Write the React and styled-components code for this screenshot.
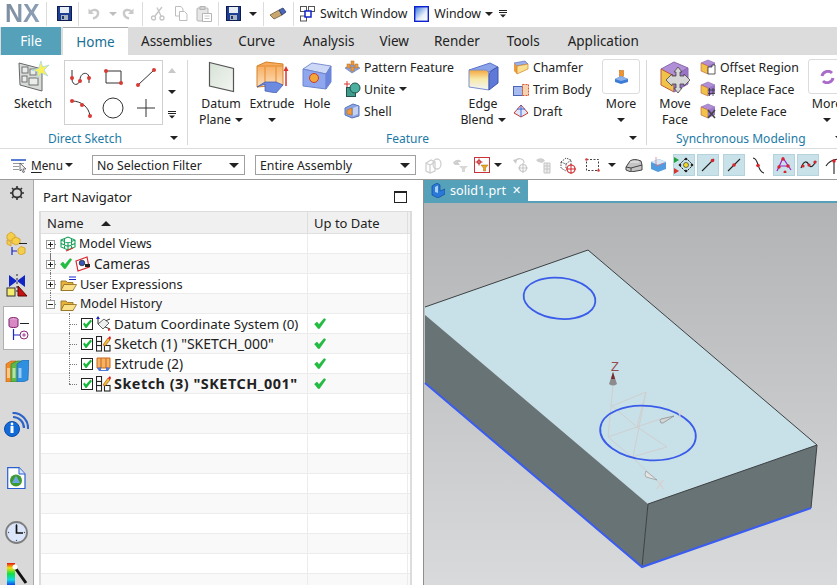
import React from 'react';
import styled, { createGlobalStyle } from 'styled-components';

const Global = createGlobalStyle`
  html, body { margin: 0; padding: 0; background: #fff; overflow: hidden; }
  * { box-sizing: border-box; }
`;

const TEAL = '#56a1ba';

/* ---------- small drawings ---------- */
const IcoSvg = styled.svg`
  display: block;
  flex: none;
`;
const Ico = ({ w = 16, h = 16, children }) => (
  <IcoSvg width={w} height={h} viewBox={`0 0 ${w} ${h}`}>{children}</IcoSvg>
);

const SaveIco = () => (
  <Ico w={15} h={15}>
    <rect x=".5" y=".5" width="14" height="14" fill="#1f3f92" stroke="#0c1c50" />
    <rect x="3" y="1" width="9" height="6" fill="#e8edf5" />
    <rect x="4" y="9" width="7" height="5" fill="#a9b4c4" />
    <rect x="5" y="10" width="2" height="3" fill="#22386f" />
  </Ico>
);
const UndoIco = ({ flip }) => (
  <Ico w={13} h={13}>
    <g transform={flip ? 'translate(13 0) scale(-1 1)' : undefined} fill="none" stroke="#c9c9c9" strokeWidth="2.4">
      <path d="M3 5 C6 1.5 12 2.5 11 7 C10.5 9.5 8 11 6 11.5" />
      <path d="M1.5 1.5 L1.5 7 L7 7" fill="#c9c9c9" stroke="none" />
    </g>
  </Ico>
);
const CutIco = () => (
  <Ico w={15} h={15}>
    <g fill="none" stroke="#c4c4c4" strokeWidth="1.3">
      <path d="M12 1 L5 10 M7 1.500 L11 10" />
      <circle cx="3.500" cy="12" r="2" /><circle cx="12" cy="12" r="2" />
    </g>
  </Ico>
);
const CopyIco = () => (
  <Ico w={14} h={15}>
    <g fill="#fff" stroke="#bdbdbd">
      <path d="M1.500 .5 H7 L9 3 V10 H1.500 Z" />
      <path d="M5.500 5.500 H10.500 L13 8 V14.500 H5.500 Z" />
    </g>
  </Ico>
);
const PasteIco = () => (
  <Ico w={16} h={16}>
    <rect x="1" y="2" width="11" height="13" rx="1" fill="#e6e6e6" stroke="#b5b5b5" />
    <rect x="4" y=".5" width="5" height="3" fill="#d2d2d2" stroke="#b5b5b5" />
    <path d="M6.500 7.500 H15.500 V15.500 H6.500 Z" fill="#fff" stroke="#b5b5b5" />
    <path d="M8.500 10 H13.500 M8.500 12.500 H13.500" stroke="#c8c8c8" />
  </Ico>
);
const BrushIco = () => (
  <Ico w={18} h={13}>
    <path d="M1 8 L10 3 L13 8 L5 12 Z" fill="#c9a66d" stroke="#6d5a38" strokeWidth=".8" />
    <path d="M10 3 L14 1 L17 5 L13 8 Z" fill="#4a67b8" stroke="#26386f" strokeWidth=".8" />
  </Ico>
);
const SwitchIco = () => (
  <Ico w={15} h={17}>
    <rect x=".5" y="1.500" width="6" height="5" fill="#fff" stroke="#555" />
    <rect x="8.500" y="1.500" width="6" height="5" fill="#fff" stroke="#555" />
    <rect x=".5" y="11" width="6" height="5" fill="#fff" stroke="#555" />
    <rect x="5" y="6" width="6" height="6" fill="#fff" stroke="#1222c8" strokeWidth="1.500" />
  </Ico>
);
const WindowIco = () => (
  <Ico w={15} h={16}>
    <defs><linearGradient id="winG" x1="0" y1="0" x2="1" y2="1"><stop offset="0" stopColor="#2f6fd8" /><stop offset=".6" stopColor="#e8f0fb" /><stop offset="1" stopColor="#fff" /></linearGradient></defs>
    <rect x=".7" y=".7" width="13.600" height="14.600" fill="url(#winG)" stroke="#0d1fd0" strokeWidth="1.400" />
  </Ico>
);
const MenuLines = () => (
  <Ico w={8} h={8}>
    <path d="M0 .5 H8 M0 2.500 H8" stroke="#222" />
    <path d="M1 4.500 H7 L4 7.500 Z" fill="#222" />
  </Ico>
);

/* ribbon */
const SketchBig = () => (
  <Ico w={32} h={32}>
    <path d="M2 2 L25 8 V30 L3 24 Z" fill="#d8dcd8" stroke="#666" />
    <g fill="#e9ece9" stroke="#666" strokeWidth=".9">
      <rect x="5" y="6" width="6" height="6" /><rect x="13" y="8" width="6" height="6" />
      <rect x="5" y="15" width="5" height="6" /><rect x="12" y="17" width="9" height="7" />
    </g>
    <path d="M24 0 L25.500 6 L32 4 L27 9 L31 15 L24.500 12 L20 17 L21 11 L15 9 L21.500 7.500 Z" fill="#f9f05a" stroke="#9fd2ee" strokeWidth=".7" />
  </Ico>
);
const Dot = ({ x, y }) => <circle cx={x} cy={y} r="2" fill="#d83a36" />;
const CurveG = ({ children, dots }) => (
  <Ico w={24} h={24}>
    <g fill="none" stroke="#333" strokeWidth="1">{children}</g>
    {dots.map(([x, y]) => <Dot key={`${x}-${y}`} x={x} y={y} />)}
  </Ico>
);
const DatumBig = () => (
  <Ico w={27} h={32}>
    <defs><linearGradient id="dpG" x1="0" y1="0" x2="1" y2="1"><stop offset="0" stopColor="#d7e2d6" /><stop offset="1" stopColor="#f2f6f1" /></linearGradient></defs>
    <path d="M1.500 1.500 L25.500 7.500 V30.500 L1.500 25 Z" fill="url(#dpG)" stroke="#555" strokeWidth="1.200" />
  </Ico>
);
const ExtrudeBig = () => (
  <Ico w={33} h={32}>
    <defs><linearGradient id="exG" x1="0" y1="0" x2="0" y2="1"><stop offset="0" stopColor="#f7a552" /><stop offset="1" stopColor="#fbe0bd" /></linearGradient></defs>
    <path d="M1 5 L10 1 L27 3 L27 24 L1 26 Z" fill="url(#exG)" stroke="#d2822a" />
    <path d="M9 6 V25 M20 6 V26 M1 5 L27 5" stroke="#e08a33" fill="none" />
    <path d="M1 26 L9 23 L9 30 L20 32 L27 24 L20 21 H9 Z" fill="#6b8ae0" stroke="#3c57b0" strokeWidth=".7" />
    <path d="M30 25 V8" stroke="#d8332e" strokeWidth="1.500" /><path d="M27.500 10 L30 5 L32.500 10 Z" fill="#d8332e" />
  </Ico>
);
const HoleBig = () => (
  <Ico w={30} h={30}>
    <path d="M1 7 L10 1 L29 4 L24 12 Z" fill="#cdd8f6" stroke="#7c90d0" />
    <path d="M1 7 L24 12 V27 L1 24 Z" fill="#8fa7ee" stroke="#6f86d0" />
    <path d="M24 12 L29 4 V20 L24 27 Z" fill="#6b84df" stroke="#6f86d0" />
    <ellipse cx="12" cy="16" rx="4.500" ry="4.500" fill="#f3a63a" stroke="#cc3b28" />
  </Ico>
);
const PatternIco = () => (
  <Ico w={17} h={14}>
    <path d="M1 8 L8 4 L16 8 L8 13 Z" fill="#8aa4e3" stroke="#5c74b8" strokeWidth=".6" />
    <g fill="#ef9a3c" stroke="#b46a1e" strokeWidth=".5"><rect x="3" y="4" width="3" height="4" /><rect x="7" y="1" width="3" height="4" /><rect x="11" y="4" width="3" height="4" /><rect x="7" y="7" width="3" height="4" /></g>
  </Ico>
);
const UniteIco = () => (
  <Ico w={17} h={16}>
    <path d="M3 0 V6 M0 3 H6" stroke="#d8332e" />
    <rect x="2.500" y="6.500" width="9" height="9" fill="#3d9c8c" stroke="#23534c" />
    <circle cx="11" cy="7" r="5" fill="#4cb0a0" stroke="#23534c" />
  </Ico>
);
const ShellIco = () => (
  <Ico w={16} h={16}>
    <path d="M1 5 L9 1 L15 3 V13 L8 15 L1 12 Z" fill="#8aa4e3" stroke="#5c74b8" />
    <path d="M3 7 L8 5 V12 L3 11 Z" fill="#ef9a3c" stroke="#b46a1e" strokeWidth=".6" />
    <path d="M9 5 L14 3 V11 L9 13 Z" fill="#c4d2f2" />
  </Ico>
);
const EdgeBig = () => (
  <Ico w={31} h={31}>
    <defs><linearGradient id="ebG" x1="0" y1="0" x2="0" y2="1"><stop offset="0" stopColor="#f4a63c" /><stop offset=".45" stopColor="#f7e9a8" /><stop offset="1" stopColor="#f2f4fb" /></linearGradient></defs>
    <path d="M1 9 L22 2 L30 6 L21 11 Z" fill="#8ba3e8" stroke="#5c74c8" />
    <path d="M1 9 H18 Q21 10 21 14 V29 L1 26 Z" fill="url(#ebG)" stroke="#7b8fd0" />
    <path d="M21 14 Q21 10 30 6 V22 L21 29 Z" fill="#5f79d8" stroke="#4057b0" />
  </Ico>
);
const ChamferIco = () => (
  <Ico w={16} h={15}>
    <path d="M1 3 L12 1 L15 4 L4 6 Z" fill="#9bb0ea" stroke="#5c74b8" strokeWidth=".7" />
    <path d="M1 3 L4 6 L4 14 L1 11 Z" fill="#ef9a3c" />
    <path d="M4 6 L15 4 V9 L4 14 Z" fill="#f9df90" stroke="#d2822a" strokeWidth=".7" />
  </Ico>
);
const TrimIco = () => (
  <Ico w={16} h={13}>
    <rect x=".5" y="3.500" width="9" height="9" fill="#a8bbf0" stroke="#4c64b8" />
    <path d="M9.500 1.500 H15.500 V12.500 H9.500 Z" fill="#f6d3b0" stroke="#d8552e" strokeDasharray="2 1" />
  </Ico>
);
const DraftIco = () => (
  <Ico w={16} h={14}>
    <path d="M1 9 L8 1 L15 9 L8 13 Z" fill="#dfe6fa" stroke="#c83a2e" strokeWidth="1" />
    <path d="M8 1 V13 M4 5 L12 5" stroke="#3f68d6" strokeWidth="1" />
  </Ico>
);
const MoreFeatureIco = () => (
  <Ico w={15} h={14}>
    <rect x="5.500" y=".5" width="4" height="6" fill="#f0952e" stroke="#c66f1c" strokeWidth=".6" />
    <path d="M1 9 L7 6 L14 9 V12 L7 14 L1 12 Z" fill="#3d7cd6" />
    <path d="M1 9 L7 6 L14 9 L7 11 Z" fill="#8bb3ea" />
  </Ico>
);
const MoveFaceBig = () => (
  <Ico w={31} h={32}>
    <path d="M1 8 L14 1 L28 7 L14 15 Z" fill="#b08fd6" stroke="#8a6ab0" />
    <path d="M1 8 L14 15 V31 L1 24 Z" fill="#f0c24a" stroke="#c05a3a" />
    <path d="M14 15 L28 7 V23 L14 31 Z" fill="#9a74c6" stroke="#8a6ab0" />
    <path d="M18 6 L22 11 H20 V15 H24 V13 L30 19 L24 25 V23 H20 V27 H22 L18 32 L14 27 H16 V23 H12 V25 L6 19 L12 13 V15 H16 V11 H14 Z" fill="#d7d7d7" stroke="#444" strokeWidth=".8" />
  </Ico>
);
const FaceIco = ({ variant }) => (
  <Ico w={16} h={16}>
    <path d="M1 4 L8 1 L15 4 L8 7 Z" fill="#b08fd6" stroke="#8a6ab0" strokeWidth=".6" />
    <path d="M1 4 L8 7 V15 L1 12 Z" fill="#f0c24a" stroke="#c05a3a" strokeWidth=".6" />
    <path d="M8 7 L15 4 V12 L8 15 Z" fill="#9a74c6" />
    {variant === 'offset' && <path d="M8 8 H12 V6 H15 V15 H8 Z" fill="#fff" stroke="#333" strokeWidth=".8" />}
    {variant === 'replace' && <path d="M8 9 H15 M8 12.500 H15 M9.500 7 V15 M13 7 V15" stroke="#333" strokeWidth=".8" />}
    {variant === 'delete' && <path d="M8 7 L15 15 M15 7 L8 15" stroke="#444" strokeWidth="1.600" />}
  </Ico>
);
const MoreSyncIco = () => (
  <Ico w={15} h={14}>
    <path d="M2 6 A6 6 0 0 1 12 3" fill="none" stroke="#a96dc9" strokeWidth="3" />
    <path d="M13 8 A6 6 0 0 1 3 11" fill="none" stroke="#a96dc9" strokeWidth="3" />
  </Ico>
);

/* command bar */
const MenuIco = () => (
  <Ico w={17} h={15}>
    <rect x="0" y="1" width="15" height="2" fill="#5b7fd0" />
    <path d="M2 5.500 H13 M2 8.500 H8 M2 11.500 H8" stroke="#9a9a9a" />
    <path d="M9 5 L15 11 H12 L13.500 14 L12 14.500 L10.500 11.500 L9 13 Z" fill="#eee" stroke="#444" strokeWidth=".7" />
  </Ico>
);
const FadedParts = () => (
  <Ico w={17} h={17}>
    <g fill="none" stroke="#cfcfcf" strokeWidth="1.300">
      <path d="M1 6 L6 3 L10 5 V14 L5 16 L1 14 Z M5 8 V16 M1 6 L5 8 L10 5" /><ellipse cx="12" cy="7" rx="4" ry="5" />
    </g>
  </Ico>
);
const FadedFunnel = () => (
  <Ico w={17} h={14}>
    <path d="M1 5 C3 1 9 1 9 4 L6 4 L8 7 L3 7 Z" fill="#cfcfcf" />
    <path d="M7 8 H16 L13 11 V14 H10 V11 Z" fill="#d8d8d8" />
  </Ico>
);
const RedFilter = () => (
  <Ico w={16} h={16}>
    <rect x=".5" y=".5" width="15" height="15" fill="#fff" stroke="#c8343a" />
    <circle cx="5" cy="5" r="1.800" fill="none" stroke="#c8343a" />
    <path d="M5 1.500 V8.500 M1.500 5 H8.500" stroke="#c8343a" />
    <path d="M7 8 H14 L11.500 11 V14 H9.500 V11 Z" fill="#eea520" stroke="#a0701a" strokeWidth=".5" />
  </Ico>
);
const FadedRotate = () => (
  <Ico w={17} h={17}>
    <g fill="none" stroke="#c8c8c8" strokeWidth="1.200">
      <path d="M2 5 C4 0 11 1 11 6" /><circle cx="10" cy="11" r="3.500" /><path d="M10 6 V16 M5 11 H15" />
    </g>
    <path d="M0 3 L4 2 L3 7 Z" fill="#c8c8c8" />
  </Ico>
);
const FadedAssembly = () => (
  <Ico w={17} h={17}>
    <path d="M1 3 C5 0 9 1 10 4 L7 6 L3 5 Z" fill="#cfcfcf" />
    <path d="M9 6 H15 V16 H9 Z M9 9 H15 M9 12 H15 M12 6 V16" fill="#eee" stroke="#c4c4c4" />
  </Ico>
);
const TargetCube = () => (
  <Ico w={18} h={17}>
    <path d="M2 5 L7 1 L12 3 V9 M2 5 V11 L7 14 M2 5 L7 7 L12 3 M7 7 V11" fill="none" stroke="#555" strokeDasharray="1.500 1" />
    <circle cx="12" cy="12" r="4" fill="none" stroke="#d2262c" strokeWidth="1.200" />
    <path d="M12 7 V17 M7 12 H17" stroke="#d2262c" />
  </Ico>
);
const DashedRect = () => (
  <Ico w={16} h={16}>
    <rect x="1.500" y="2.500" width="12" height="11" fill="none" stroke="#444" strokeDasharray="2 1.500" />
    <circle cx="1.500" cy="2.500" r="1.300" fill="#d83a36" /><circle cx="13.500" cy="13.500" r="1.300" fill="#d83a36" />
  </Ico>
);
const GrayBlock = () => (
  <Ico w={18} h={14}>
    <path d="M1 9 L5 3 Q9 0 16 3 L17 7 V12 L6 14 L1 12 Z" fill="#c4c4c4" stroke="#444" />
    <path d="M1 9 L6 10 L17 7 M6 10 V14" fill="none" stroke="#444" />
    <path d="M5 4 L14 4" stroke="#eee" />
  </Ico>
);
const BlueBlock = () => (
  <Ico w={17} h={16}>
    <path d="M1 5 L9 2 L16 5 V12 L8 15 L1 12 Z" fill="#4f9ce0" />
    <path d="M1 5 L8 8 L16 5 L9 2 Z" fill="#d5e9f7" />
    <path d="M6 0 V9 L14 6" fill="none" stroke="#e06a76" strokeWidth=".7" />
  </Ico>
);
const SnapPoints = () => (
  <Ico w={20} h={18}>
    <path d="M0 1 L5 4 L0 7 Z" fill="#1aa33c" /><path d="M0 12 L5 15 L0 18 Z" fill="#d8332e" />
    <path d="M12 2 L19 9 L12 16 L5 9 Z" fill="none" stroke="#222" strokeDasharray="2 1" />
    <circle cx="12" cy="9" r="2.500" fill="#f5dc2c" stroke="#222" strokeWidth=".6" />
    <circle cx="12" cy="3" r="1.300" fill="#222" /><circle cx="12" cy="15" r="1.300" fill="#222" /><circle cx="6" cy="9" r="1.300" fill="#222" /><circle cx="18" cy="9" r="1.300" fill="#222" />
  </Ico>
);
const LineSnap = ({ mid }) => (
  <Ico w={14} h={14}>
    <path d="M1 13 L13 1" stroke="#222" strokeWidth="1.100" />
    <circle cx={mid ? 7 : 11.5} cy={mid ? 7 : 2.5} r="1.800" fill="#d8242c" />
  </Ico>
);
const SCurve = () => (
  <Ico w={13} h={17}>
    <path d="M1 1 C7 1 5 15 12 16" fill="none" stroke="#222" strokeWidth="1.100" />
    <circle cx="6" cy="8.500" r="1.800" fill="#d8242c" />
  </Ico>
);
const PolySnap = () => (
  <Ico w={16} h={16}>
    <path d="M1 14 L7 1 L15 13 M3 9 L13 9" fill="none" stroke="#a21fc4" strokeWidth="1.200" />
    <circle cx="7" cy="2" r="1.700" fill="#d8242c" /><circle cx="3" cy="10" r="1.700" fill="#d8242c" /><circle cx="12" cy="9" r="1.700" fill="#d8242c" /><circle cx="9" cy="15" r="1.500" fill="#d8242c" />
  </Ico>
);
const WaveSnap = () => (
  <Ico w={17} h={12}>
    <path d="M1 9 C4 1 7 2 9 6 C11 10 14 6 16 2" fill="none" stroke="#222" strokeWidth="1.200" />
    <circle cx="3" cy="7" r="1.600" fill="#d8242c" /><circle cx="9" cy="6" r="1.600" fill="#d8242c" /><circle cx="15" cy="3" r="1.600" fill="#d8242c" />
  </Ico>
);
const Tangent = () => (
  <Ico w={17} h={17}>
    <path d="M1 9 C4 4 10 2 16 2 M9 3 V17" fill="none" stroke="#222" strokeWidth="1.100" />
    <circle cx="9" cy="4" r="1.800" fill="#d8242c" />
  </Ico>
);

/* left rail */
const GearIco = () => (
  <Ico w={14} h={14}>
    <circle cx="7" cy="7" r="4.500" fill="none" stroke="#333" strokeWidth="1.800" />
    <path d="M7 0 V2.500 M7 11.500 V14 M0 7 H2.500 M11.500 7 H14 M2 2 L3.800 3.800 M10.200 10.200 L12 12 M12 2 L10.200 3.800 M3.800 10.200 L2 12" stroke="#333" strokeWidth="1.600" />
  </Ico>
);
const AssemblyIco = () => (
  <Ico w={22} h={24}>
    <g fill="#f4cf49" stroke="#d49a25" strokeWidth=".8">
      <path d="M1 4 L5 1 L9 4 V8 L5 10 L1 8 Z" /><path d="M6 8 L10 6 L14 8 V12 L10 14 L6 12 Z" /><path d="M1 9 L5 11 V15 L1 13 Z" />
      <path d="M12 18 L15 15.500 L19 17 V22 L15 24 L12 22 Z" />
    </g>
    <path d="M6 16 V24 M6 20 H11" stroke="#1a28c8" strokeWidth="1.200" /><path d="M13 12.500 H21" stroke="#222" />
  </Ico>
);
const ConstraintIco = () => (
  <Ico w={22} h={23}>
    <path d="M3 1 L11 7 L3 13 Z M19 1 L11 7 L19 13 Z" fill="#1126c4" />
    <path d="M11 0 V20" stroke="#222" strokeDasharray="2 2" />
    <rect x="1" y="14" width="8" height="8" fill="#f6ec6a" stroke="#333" />
    <path d="M12 22 V12 L21 22 Z" fill="#c8100f" stroke="#5c0808" />
  </Ico>
);
const PartIco = () => (
  <Ico w={22} h={23}>
    <ellipse cx="5.500" cy="2.500" rx="4.500" ry="2" fill="#e6a6d4" stroke="#7c1d6a" />
    <path d="M1 2.500 V9 C1 11 10 11 10 9 V2.500" fill="#d889c4" stroke="#7c1d6a" />
    <path d="M5.500 12 V23 M5.500 18 H12" stroke="#1a28c8" strokeWidth="1.200" /><path d="M12 6.500 H21" stroke="#222" />
    <circle cx="16" cy="18" r="4" fill="none" stroke="#8a2a7a" /><circle cx="16" cy="18" r="1.700" fill="#b86aa8" />
  </Ico>
);
const BooksIco = () => (
  <Ico w={24} h={22}>
    <path d="M1 4 L6 1 H11 V22 H1 Z" fill="#f08a28" stroke="#b85c10" strokeWidth=".6" />
    <path d="M6 4 L12 1 H17 V22 H6 Z" fill="#5cb848" stroke="#2f7a24" strokeWidth=".6" />
    <path d="M12 4 L18 0 H24 L23 20 L18 22 H12 Z" fill="#2f8fe0" stroke="#1a5ea8" strokeWidth=".6" />
    <rect x="2" y="8" width="3" height="10" fill="#fbc88c" /><rect x="7.500" y="8" width="3" height="10" fill="#b5e2a8" /><rect x="13.500" y="8" width="3" height="10" fill="#9ccbf4" />
  </Ico>
);
const InfoIco = () => (
  <Ico w={25} h={25}>
    <g fill="none" stroke="#2e64c8" strokeWidth="2.200"><path d="M9 5 A11 11 0 0 1 20 16" /><path d="M8.500 1 A15 15 0 0 1 24 17" /></g>
    <circle cx="8" cy="17" r="7.500" fill="#1269d8" stroke="#0c4aa4" />
    <path d="M6.500 14 H9.500 V21 H6.500 Z" fill="#fff" /><circle cx="8" cy="12" r="1.400" fill="#fff" />
  </Ico>
);
const DocIco = () => (
  <Ico w={19} h={23}>
    <path d="M.7 .7 H12 L18 7 V21.500 H.7 Z" fill="#fff" stroke="#2a5fd0" strokeWidth="1.200" />
    <path d="M12 .7 V7 H18" fill="#d8e4f8" stroke="#2a5fd0" />
    <circle cx="9" cy="13.500" r="6" fill="#3e9a2e" /><path d="M9 8.500 L13 16 H5 Z" fill="#6aa8e8" />
  </Ico>
);
const ClockIco = () => (
  <Ico w={23} h={23}>
    <circle cx="11.500" cy="11.500" r="10.500" fill="#dbe6fa" stroke="#7e7e7e" strokeWidth="1.800" />
    <path d="M11.500 4 V12 H18" fill="none" stroke="#111" strokeWidth="1.700" />
    <g fill="#456"><circle cx="11.500" cy="3.500" r=".7" /><circle cx="19.500" cy="11.500" r=".7" /><circle cx="11.500" cy="19.500" r=".7" /><circle cx="3.500" cy="11.500" r=".7" /></g>
  </Ico>
);
const ColorIco = () => (
  <Ico w={22} h={24}>
    <defs><linearGradient id="spec" x1="0" y1="0" x2="0" y2="1"><stop offset="0" stopColor="#e81010" /><stop offset=".2" stopColor="#f0e010" /><stop offset=".45" stopColor="#10e040" /><stop offset=".7" stopColor="#10d8e8" /><stop offset="1" stopColor="#1010e8" /></linearGradient></defs>
    <rect x="1" y="0" width="8" height="24" fill="url(#spec)" />
    <path d="M10 6 L20 20" stroke="#111" strokeWidth="3" />
    <circle cx="9" cy="4" r="2.500" fill="#fff" />
  </Ico>
);

/* tree */
const Check = () => (
  <Ico w={12} h={11}>
    <path d="M.5 6 L3 4 L5 6.500 L10 .5 L11.800 1.500 L5.500 10.500 H4 Z" fill="#1fc040" stroke="#0e9a2c" strokeWidth=".4" />
  </Ico>
);
const ViewsIco = () => (
  <Ico w={16} h={16}>
    <g fill="none" stroke="#17a05a" strokeWidth="1.100">
      <path d="M1 4 L8 1 L15 4 V11 L8 14 L1 11 Z M1 4 L8 7 L15 4 M8 7 V14 M4.500 2.500 V12.500 M11.500 2.500 V12.500 M1 7.500 L8 10.500 L15 7.500" />
    </g>
    <path d="M6 15 L13 12" stroke="#d8332e" strokeWidth="1.200" />
  </Ico>
);
const CameraIco = () => (
  <Ico w={16} h={16}>
    <path d="M1 5 L12 1 L14 11 L3 15 Z" fill="#fff" stroke="#d8242c" strokeWidth="1.200" />
    <circle cx="7" cy="7" r="2.800" fill="#3a55b8" stroke="#222" strokeWidth=".7" />
    <path d="M10 8 H15 V11 H10 Z" fill="#222" />
  </Ico>
);
const FolderIco = ({ lines }) => (
  <Ico w={17} h={16}>
    {lines && <path d="M9 1 H16 M9 3.500 H16" stroke="#1a28c8" />}
    <path d="M1 5 H6 L7.500 6.500 H13 V14.500 H1 Z" fill="#e8b13a" stroke="#8c6a1c" strokeWidth=".8" />
    <path d="M1 14.500 L4 8.500 H16.500 L13 14.500 Z" fill="#fbe08a" stroke="#8c6a1c" strokeWidth=".8" />
  </Ico>
);
const CheckBox = () => (
  <Ico w={12} h={12}>
    <rect x=".5" y=".5" width="11" height="11" fill="#fff" stroke="#222" />
    <path d="M2 6 L3.500 4.500 L5 6.500 L9.500 1.500 L11 3 L5.500 10 H4.500 Z" fill="#18b83c" />
  </Ico>
);
const DatumIco = () => (
  <Ico w={15} h={15}>
    <path d="M2 1 V8 L14 13 M2 8 L14 3" fill="none" stroke="#333" />
    <path d="M2 8 L8 3 L13 7 L7 13 Z" fill="#eee" stroke="#444" strokeWidth=".8" />
    <path d="M0 3 L2 0 L4 3 Z" fill="#1a28c8" />
    <path d="M12 12 L15 14 L12 15 Z" fill="#d8332e" />
  </Ico>
);
const SketchIco = () => (
  <Ico w={15} h={16}>
    <g fill="#fff" stroke="#222" strokeWidth="1.100">
      <rect x=".5" y=".5" width="5" height="5" /><rect x=".5" y="9.500" width="5" height="5.500" /><rect x="8.500" y="9.500" width="5.500" height="5.500" />
      <rect x=".5" y="5.500" width="5" height="4" />
    </g>
    <path d="M7 9 L12 2 L14 4 L9 10 Z" fill="#f0c030" stroke="#b8501a" strokeWidth=".7" />
    <path d="M12 2 L14 0 L15 2 L14 4 Z" fill="#d8242c" />
  </Ico>
);
const ExtrudeIco = () => (
  <Ico w={15} h={14}>
    <path d="M1 1 H14 V11 H1 Z" fill="#f6b264" stroke="#c8661a" />
    <path d="M5 1 V11 M10 1 V11" stroke="#c8661a" />
    <path d="M1 11 L5 10 V13 H10 V10 L14 11 L12 14 H3 Z" fill="#4f78d8" />
  </Ico>
);
const CubeTab = () => (
  <Ico w={15} h={15}>
    <path d="M2 3 L7 0 L10 2 V8 L15 6 V11 L8 15 L2 12 Z" fill="#2a79d8" stroke="#124a9e" strokeWidth=".7" />
    <path d="M5 4 L8 2.500 V10 L5 9 Z" fill="#a8d0f6" />
  </Ico>
);

/* ---------- page parts ---------- */
const Page = styled.div`
  width: 837px;
  height: 585px;
  overflow: hidden;
  display: flex;
  flex-direction: column;
  background: #fff;
  color: #222;
  font-family: "Noto Sans", "Liberation Sans", sans-serif;
  font-size: 12.3px;
`;

const QuickBar = styled.div`
  height: 27px;
  flex: none;
  display: flex;
  align-items: center;
  padding-left: 5px;
  white-space: nowrap;
`;
const Logo = styled.span`
  width: 37px;
  font: bold 25px/27px "Liberation Sans", sans-serif;
  background: linear-gradient(100deg, #7d8c9e, #8ea3b9);
  -webkit-background-clip: text;
  background-clip: text;
  color: transparent;
`;
const QuickSep = styled.span`
  width: 1px;
  height: 24px;
  background: #dcdcdc;
  margin: 0 ${({ $r = 8 }) => $r}px 0 ${({ $l = 5 }) => $l}px;
`;
const Slot = styled.span`
  display: flex;
  align-items: center;
  justify-content: center;
  flex: none;
  width: ${({ $w }) => $w}px;
  margin-left: ${({ $ml = 0 }) => $ml}px;
`;
const QuickLabel = styled.span`
  color: #222;
  margin-left: ${({ $ml = 0 }) => $ml}px;
`;
const Caret = styled.span`
  display: inline-block;
  flex: none;
  width: 0;
  height: 0;
  border-left: ${({ $s = 4 }) => $s}px solid transparent;
  border-right: ${({ $s = 4 }) => $s}px solid transparent;
  border-top: ${({ $s = 4 }) => $s}px solid ${({ $c = '#222' }) => $c};
  margin-left: ${({ $ml = 0 }) => $ml}px;
`;

const TabBar = styled.div`
  height: 28px;
  flex: none;
  display: flex;
  background: #dcdcdc;
  padding-left: 1px;
  white-space: nowrap;
  font-size: 13.5px;
`;
const FileTab = styled.div`
  width: 60px;
  background: ${TEAL};
  color: #fff;
  display: flex;
  align-items: center;
  justify-content: center;
`;
const ActiveTab = styled.div`
  width: 65px;
  margin-left: 2px;
  background: #fff;
  border-top: 1px solid #a8a8a8;
  color: #1a6f96;
  display: flex;
  align-items: center;
  justify-content: center;
`;
const Tab = styled.div`
  display: flex;
  align-items: center;
  margin-left: ${({ $ml }) => $ml}px;
`;

const Ribbon = styled.div`
  height: 94px;
  flex: none;
  display: flex;
  border-bottom: 1px solid #dcdcdc;
  white-space: nowrap;
`;
const Group = styled.div`
  position: relative;
  flex: none;
  width: ${({ $w }) => $w}px;
  display: flex;
  flex-direction: column;
  &::after {
    content: '';
    display: ${({ $noSep }) => ($noSep ? 'none' : 'block')};
    position: absolute;
    right: 0;
    top: 5px;
    bottom: 3px;
    width: 1px;
    background: #d8d8d8;
  }
`;
const GroupBody = styled.div`
  height: 75px;
  flex: none;
  display: flex;
  padding-left: ${({ $pl = 0 }) => $pl}px;
`;
const GroupFoot = styled.div`
  position: relative;
  height: 18px;
  flex: none;
  color: #1d7aa6;
  font-size: 12px;
  line-height: 18px;
  padding-left: ${({ $pl }) => $pl}px;
`;
const FootCaret = styled.span`
  position: absolute;
  top: 6px;
  left: ${({ $x }) => $x}px;
  display: flex;
`;
const Big = styled.div`
  flex: none;
  width: ${({ $w }) => $w}px;
  margin-left: ${({ $ml = 0 }) => $ml}px;
  display: flex;
  flex-direction: column;
  align-items: center;
  text-align: center;
`;
const BigIcon = styled.div`
  height: 41px;
  display: flex;
  align-items: center;
  justify-content: center;
  padding-top: 2px;
`;
const BigLine = styled.div`
  display: flex;
  align-items: center;
  justify-content: center;
  height: 16px;
  line-height: 16px;
  gap: 4px;
`;
const MoreBox = styled.div`
  width: 38px;
  height: 35px;
  margin-top: 4px;
  margin-bottom: 2px;
  border: 1px solid #dcdcdc;
  border-radius: 3px;
  display: flex;
  align-items: center;
  justify-content: center;
`;
const Gallery = styled.div`
  flex: none;
  width: 99px;
  height: 65px;
  margin: 5px 0 0 ${({ $ml }) => $ml}px;
  border: 1px solid #d0d0d0;
  display: grid;
  grid-template-columns: repeat(3, 1fr);
  grid-template-rows: repeat(2, 1fr);
  place-items: center;
`;
const GalleryScroll = styled.div`
  flex: none;
  width: 14px;
  margin: 13px 0 0 2px;
  display: flex;
  flex-direction: column;
  align-items: center;
  gap: 17px;
`;
const UpCaret = styled.span`
  width: 0;
  height: 0;
  border-left: 4px solid transparent;
  border-right: 4px solid transparent;
  border-bottom: 5px solid #c8c8c8;
`;
const SmallCol = styled.div`
  flex: none;
  width: ${({ $w }) => $w}px;
  margin-left: ${({ $ml = 0 }) => $ml}px;
  padding-top: 1px;
  display: flex;
  flex-direction: column;
`;
const SmallRow = styled.div`
  height: 22px;
  display: flex;
  align-items: center;
  gap: 4px;
`;
const SmallIcon = styled.span`
  width: 16px;
  display: flex;
  justify-content: center;
  flex: none;
`;

const CommandBar = styled.div`
  height: 31px;
  flex: none;
  display: flex;
  align-items: center;
  white-space: nowrap;
  padding: 2px 0 0 11px;
  border-bottom: 1px solid #9a9a9a;
`;
const MenuLabel = styled.span`
  width: 31px;
  margin-left: 3px;
  font-size: 11.8px;
  u { text-underline-offset: 2px; }
`;
const BarSep = styled.span`
  width: 1px;
  height: 22px;
  background: #dcdcdc;
  margin: 0 13px 0 6px;
`;
const SelectBox = styled.div`
  width: ${({ $w }) => $w}px;
  margin-left: ${({ $ml = 0 }) => $ml}px;
  height: 20px;
  flex: none;
  border: 1px solid #a0a0a0;
  display: flex;
  align-items: center;
  justify-content: space-between;
  padding: 0 5px 0 4px;
`;
const BarIcon = styled.span`
  flex: none;
  display: flex;
  align-items: center;
  justify-content: center;
  width: ${({ $w = 22 }) => $w}px;
  height: 22px;
  margin-left: ${({ $ml = 0 }) => $ml}px;
  background: ${({ $on }) => ($on ? '#c9e2ea' : 'transparent')};
  border: 1px solid ${({ $on }) => ($on ? '#b4d3dd' : 'transparent')};
`;

const Main = styled.div`
  flex: 1;
  min-height: 0;
  display: flex;
`;
const Rail = styled.div`
  width: 34px;
  flex: none;
  background: #d9d9d9;
  border-right: 1px solid #a9a9a9;
  padding-top: 3px;
  overflow: hidden;
`;
const RailItem = styled.div`
  height: ${({ $h }) => $h}px;
  margin-bottom: ${({ $mb = 0 }) => $mb}px;
  margin-left: ${({ $active }) => ($active ? 3 : 0)}px;
  margin-right: ${({ $active }) => ($active ? -1 : 0)}px;
  display: flex;
  align-items: center;
  justify-content: center;
  background: ${({ $active }) => ($active ? '#fff' : 'transparent')};
  border: ${({ $active }) => ($active ? '1px solid #b0b0b0' : 'none')};
  border-right: none;
`;

const Navigator = styled.div`
  width: 389px;
  flex: none;
  padding: 0 11px 0 5px;
  display: flex;
  flex-direction: column;
  font-size: 13px;
`;
const NavHead = styled.div`
  height: 31px;
  flex: none;
  display: flex;
  align-items: center;
  justify-content: space-between;
  padding: 2px 5px 0 4px;
`;
const RestoreBtn = styled.span`
  width: 13px;
  height: 12px;
  border: 1px solid #222;
  border-top-width: 2px;
`;
const TreeTable = styled.div`
  flex: 1;
  min-height: 0;
  overflow: hidden;
  border: 1px solid #dcdcdc;
  border-bottom: none;
  border-left-width: 2px;
  border-right-width: 2px;
`;
const TreeHead = styled.div`
  height: 22px;
  display: grid;
  grid-template-columns: 267px 100px 1fr;
  background: #f0f0f0;
  border-bottom: 1px solid #e0e0e0;
`;
const HeadCell = styled.div`
  display: flex;
  align-items: center;
  padding: 1px 0 0 6px;
  border-right: 1px solid #dedede;
  gap: 17px;
`;
const SortUp = styled.span`
  width: 0;
  height: 0;
  border-left: 5px solid transparent;
  border-right: 5px solid transparent;
  border-bottom: 5px solid #222;
`;
const TreeRow = styled.div`
  height: 20px;
  display: grid;
  grid-template-columns: 267px 100px 1fr;
  background: ${({ $odd }) => ($odd ? '#f9f9f9' : '#fff')};
  border-bottom: 1px solid #ececec;
`;
const NameCell = styled.div`
  display: flex;
  align-items: center;
  gap: 3px;
  border-right: 1px solid #ececec;
  white-space: nowrap;
  font-weight: ${({ $bold }) => ($bold ? 700 : 400)};
`;
const RowLabel = styled.span`
  font-size: ${({ $size }) => $size}px;
  letter-spacing: ${({ $track = 0 }) => $track}px;
`;
const DateCell = styled.div`
  display: flex;
  align-items: center;
  padding-left: 6px;
  border-right: 1px solid #ececec;
`;
const Branch = styled.span`
  position: relative;
  flex: none;
  width: ${({ $w }) => $w}px;
  height: 100%;
  &::before {
    content: '';
    position: absolute;
    left: ${({ $x }) => $x}px;
    top: ${({ $first }) => ($first ? '6px' : '-1px')};
    height: ${({ $last }) => ($last ? '11px' : 'calc(100% + 1px)')};
    border-left: 1px dotted #777;
  }
  &::after {
    content: '';
    position: absolute;
    left: ${({ $x }) => $x}px;
    right: 1px;
    top: 10px;
    border-top: 1px dotted #777;
  }
`;
const Expander = styled.span`
  position: absolute;
  z-index: 1;
  left: 5px;
  top: 6px;
  width: 9px;
  height: 9px;
  background: #fff;
  border: 1px solid #9a9a9a;
  &::before {
    content: '';
    position: absolute;
    left: 1px;
    top: 3px;
    width: 5px;
    height: 1px;
    background: #222;
  }
  &::after {
    content: '';
    display: ${({ $open }) => ($open ? 'none' : 'block')};
    position: absolute;
    left: 3px;
    top: 1px;
    width: 1px;
    height: 5px;
    background: #222;
  }
`;

const Viewport = styled.div`
  flex: 1;
  min-width: 0;
  display: flex;
  flex-direction: column;
  border-left: 1px solid #8e8e8e;
`;
const DocTabs = styled.div`
  height: 23px;
  flex: none;
  border-bottom: 2px solid ${TEAL};
  display: flex;
`;
const DocTab = styled.div`
  width: 104px;
  background: ${TEAL};
  color: #fff;
  display: flex;
  align-items: center;
  padding-left: 6px;
  gap: 5px;
  font-size: 12.6px;
`;
const DocClose = styled.span`
  font: bold 11px/1 "DejaVu Sans", sans-serif;
  margin-left: 1px;
`;
const Canvas = styled.div`
  flex: 1;
  min-height: 0;
  background: linear-gradient(180deg, #b2b3b5 0%, #d9dadc 100%);
  svg { display: block; }
`;

const GALLERY = [
  { key: 'studio', dots: [[3, 13], [11, 16], [20, 13]], d: 'M3 5 V14 C3 21 10 21 11 15 C11 7 20 6 20 13 V18' },
  { key: 'rect', dots: [[5, 6], [20, 18]], d: 'M5 6 H20 V18 H5 Z' },
  { key: 'line', dots: [[4, 20], [20, 5]], d: 'M4 20 L20 5' },
  { key: 'arc', dots: [[3, 5], [13, 9], [21, 20]], d: 'M3 5 C12 5 20 11 21 20' },
  { key: 'circle', dots: [], d: 'M22 12 A10 10 0 1 1 2 12 A10 10 0 1 1 22 12' },
  { key: 'plus', dots: [], d: 'M12 3 V21 M3 12 H21' },
];

const ROWS = [
  { key: 'views', label: 'Model Views', size: 12.4, depth: 0, icons: [<ViewsIco key="i" />] },
  { key: 'cameras', label: 'Cameras', size: 13.6, depth: 0, icons: [<Check key="c" />, <CameraIco key="i" />] },
  { key: 'expr', label: 'User Expressions', size: 12.8, depth: 0, icons: [<FolderIco key="i" lines />] },
  { key: 'history', label: 'Model History', size: 12.5, depth: 0, open: true, icons: [<FolderIco key="i" />] },
  { key: 'datum', label: 'Datum Coordinate System (0)', size: 13.4, depth: 1, done: true, icons: [<DatumIco key="i" />] },
  { key: 'sk1', label: 'Sketch (1) "SKETCH_000"', size: 14, depth: 1, done: true, icons: [<SketchIco key="i" />] },
  { key: 'ext', label: 'Extrude (2)', size: 13.6, depth: 1, done: true, icons: [<ExtrudeIco key="i" />] },
  { key: 'sk2', label: 'Sketch (3) "SKETCH_001"', size: 14.4, track: 0.5, depth: 1, done: true, bold: true, last: true, icons: [<SketchIco key="i" />] },
];

const TreeItem = ({ row, odd, index }) => (
  <TreeRow $odd={odd}>
    <NameCell $bold={row.bold}>
      {row.depth === 0 ? (
        <Branch $w={16} $x={9} $first={index === 0} $last={row.open}>
          <Expander $open={row.open} />
        </Branch>
      ) : (
        <>
          <Branch $w={37} $x={28} $first={false} $last={row.last} />
          <CheckBox />
        </>
      )}
      {row.icons}
      <RowLabel $size={row.size} $track={row.track}>{row.label}</RowLabel>
    </NameCell>
    <DateCell>{row.done && <Check />}</DateCell>
    <div />
  </TreeRow>
);

const SolidDrawing = () => (
  <svg width="413" height="381" viewBox="424 204 413 381">
    <path d="M425 308 L588 251 L817 446 L648 505 L425 316 Z" fill="#c8e0e8" />
    <path d="M425 316 L648 505 L642 568 L425 384 Z" fill="#687376" />
    <path d="M648 505 L817 446 L811 509 L642 568 Z" fill="#687376" />
    <path d="M425 308 L588 251 L817 446 L648 505 M648 505 L642 568 M817 446 L811 509" fill="none" stroke="#3c4042" strokeWidth="1" />
    <path d="M425 384 L642 568 L811 509" fill="none" stroke="#3a5cf0" strokeWidth="2" />
    <ellipse cx="559.500" cy="299.300" rx="36" ry="20.500" transform="rotate(6 559.500 299.300)" fill="none" stroke="#3a5ce8" strokeWidth="1.800" />
    <g fill="none" stroke="#d0cfcf" strokeWidth="1">
      <path d="M608 438 L613 387" />
      <path d="M612 407 L646 393 L637 428 L667 448 L632 458 L608 438 L660 420" />
      <path d="M612 407 L637 428 M646 393 L633 458 M632 458 L655 480" />
    </g>
    <ellipse cx="648" cy="434" rx="48" ry="27" transform="rotate(6 648 434)" fill="none" stroke="#3a5ce8" strokeWidth="1.800" />
    <path d="M613 373 L617 385 Q613 388 609 385 Z" fill="#8d8b8b" />
    <path d="M613 373 L615 380 L611 380 Z" fill="#7a2a2a" />
    <path d="M674 417 L661 420 Q659 421 661 424 L663 424 Z" fill="#d4d4d4" stroke="#777" strokeWidth=".6" />
    <path d="M657 481 L646 472 Q644 476 646 478 Z" fill="#e4e4e4" stroke="#888" strokeWidth=".6" />
    <text x="611" y="372" fontFamily="Liberation Sans, sans-serif" fontSize="13" fill="#9a4a4a">Z</text>
    <text x="656" y="490" fontFamily="Liberation Sans, sans-serif" fontSize="13" fill="#d8cfcf">X</text>
    <text x="676" y="419" fontFamily="Liberation Sans, sans-serif" fontSize="11" fill="#d8d4d4">Y</text>
  </svg>
);

export default function App() {
  return (
    <Page>
      <Global />
      <QuickBar>
        <Logo>NX</Logo>
        <QuickSep $l={4} $r={10} />
        <SaveIco />
        <QuickSep $l={6} $r={8} />
        <UndoIco />
        <Caret $c="#bdbdbd" $ml={9} />
        <Slot $w={11} $ml={6}><UndoIco flip /></Slot>
        <QuickSep $l={8} $r={7} />
        <CutIco />
        <Slot $w={14} $ml={9}><CopyIco /></Slot>
        <Slot $w={16} $ml={8}><PasteIco /></Slot>
        <QuickSep $l={6} $r={7} />
        <SaveIco />
        <Caret $ml={8} />
        <QuickSep $l={6} $r={5} />
        <BrushIco />
        <QuickSep $l={6} $r={6} />
        <SwitchIco />
        <QuickLabel $ml={5}>Switch Window</QuickLabel>
        <Slot $w={15} $ml={7}><WindowIco /></Slot>
        <QuickLabel $ml={5}>Window</QuickLabel>
        <Caret $ml={4} />
        <Slot $w={8} $ml={6}><MenuLines /></Slot>
      </QuickBar>

      <TabBar>
        <FileTab>File</FileTab>
        <ActiveTab>Home</ActiveTab>
        <Tab $ml={13}>Assemblies</Tab>
        <Tab $ml={26}>Curve</Tab>
        <Tab $ml={28}>Analysis</Tab>
        <Tab $ml={25}>View</Tab>
        <Tab $ml={25}>Render</Tab>
        <Tab $ml={27}>Tools</Tab>
        <Tab $ml={28}>Application</Tab>
      </TabBar>

      <Ribbon>
        <Group $w={188}>
          <GroupBody $pl={10}>
            <Big $w={46}>
              <BigIcon><SketchBig /></BigIcon>
              <BigLine>Sketch</BigLine>
            </Big>
            <Gallery $ml={8}>
              {GALLERY.map((g) => (
                <CurveG key={g.key} dots={g.dots}><path d={g.d} /></CurveG>
              ))}
            </Gallery>
            <GalleryScroll>
              <UpCaret />
              <Caret />
              <MenuLines />
            </GalleryScroll>
          </GroupBody>
          <GroupFoot $pl={48}>
            Direct Sketch
            <FootCaret $x={170}><Caret /></FootCaret>
          </GroupFoot>
        </Group>

        <Group $w={459}>
          <GroupBody $pl={11}>
            <Big $w={44}>
              <BigIcon><DatumBig /></BigIcon>
              <BigLine>Datum</BigLine>
              <BigLine>Plane<Caret /></BigLine>
            </Big>
            <Big $w={44} $ml={7}>
              <BigIcon><ExtrudeBig /></BigIcon>
              <BigLine>Extrude</BigLine>
              <BigLine><Caret /></BigLine>
            </Big>
            <Big $w={36} $ml={5}>
              <BigIcon><HoleBig /></BigIcon>
              <BigLine>Hole</BigLine>
            </Big>
            <SmallCol $w={119} $ml={9}>
              <SmallRow><SmallIcon><PatternIco /></SmallIcon>Pattern Feature</SmallRow>
              <SmallRow><SmallIcon><UniteIco /></SmallIcon>Unite<Caret /></SmallRow>
              <SmallRow><SmallIcon><ShellIco /></SmallIcon>Shell</SmallRow>
            </SmallCol>
            <Big $w={40}>
              <BigIcon><EdgeBig /></BigIcon>
              <BigLine>Edge</BigLine>
              <BigLine>Blend<Caret /></BigLine>
            </Big>
            <SmallCol $w={89} $ml={10}>
              <SmallRow><SmallIcon><ChamferIco /></SmallIcon>Chamfer</SmallRow>
              <SmallRow><SmallIcon><TrimIco /></SmallIcon>Trim Body</SmallRow>
              <SmallRow><SmallIcon><DraftIco /></SmallIcon>Draft</SmallRow>
            </SmallCol>
            <Big $w={38}>
              <MoreBox><MoreFeatureIco /></MoreBox>
              <BigLine>More</BigLine>
              <BigLine><Caret /></BigLine>
            </Big>
          </GroupBody>
          <GroupFoot $pl={198}>
            Feature
            <FootCaret $x={441}><Caret /></FootCaret>
          </GroupFoot>
        </Group>

        <Group $w={190} $noSep>
          <GroupBody $pl={7}>
            <Big $w={42}>
              <BigIcon><MoveFaceBig /></BigIcon>
              <BigLine>Move</BigLine>
              <BigLine>Face</BigLine>
            </Big>
            <SmallCol $w={112} $ml={4}>
              <SmallRow><SmallIcon><FaceIco variant="offset" /></SmallIcon>Offset Region</SmallRow>
              <SmallRow><SmallIcon><FaceIco variant="replace" /></SmallIcon>Replace Face</SmallRow>
              <SmallRow><SmallIcon><FaceIco variant="delete" /></SmallIcon>Delete Face</SmallRow>
            </SmallCol>
            <Big $w={38} $ml={-4}>
              <MoreBox><MoreSyncIco /></MoreBox>
              <BigLine>More</BigLine>
              <BigLine><Caret /></BigLine>
            </Big>
          </GroupBody>
          <GroupFoot $pl={29}>
            Synchronous Modeling
            <FootCaret $x={188}><Caret /></FootCaret>
          </GroupFoot>
        </Group>
      </Ribbon>

      <CommandBar>
        <MenuIco />
        <MenuLabel><u>M</u>enu</MenuLabel>
        <Caret $ml={3} />
        <BarSep />
        <SelectBox $w={153}>No Selection Filter<Caret $s={5} /></SelectBox>
        <SelectBox $w={161} $ml={10}>Entire Assembly<Caret $s={5} /></SelectBox>
        <BarIcon $w={24} $ml={5}><FadedParts /></BarIcon>
        <BarIcon $w={24} $ml={3}><FadedFunnel /></BarIcon>
        <BarIcon $w={17} $ml={1}><RedFilter /></BarIcon>
        <BarIcon $w={16}><Caret /></BarIcon>
        <BarIcon $ml={4}><FadedRotate /></BarIcon>
        <BarIcon><FadedAssembly /></BarIcon>
        <BarIcon $ml={3}><TargetCube /></BarIcon>
        <BarIcon $ml={3}><DashedRect /></BarIcon>
        <BarIcon $w={16}><Caret /></BarIcon>
        <BarIcon $ml={3}><GrayBlock /></BarIcon>
        <BarIcon $ml={2}><BlueBlock /></BarIcon>
        <BarIcon $ml={4} $on><SnapPoints /></BarIcon>
        <BarIcon $ml={2} $on><LineSnap /></BarIcon>
        <BarIcon $ml={4} $on><LineSnap mid /></BarIcon>
        <BarIcon $ml={2}><SCurve /></BarIcon>
        <BarIcon $ml={4} $on><PolySnap /></BarIcon>
        <BarIcon $ml={2} $on><WaveSnap /></BarIcon>
        <BarIcon $ml={3}><Tangent /></BarIcon>
      </CommandBar>

      <Main>
        <Rail>
          <RailItem $h={20} $mb={18}><GearIco /></RailItem>
          <RailItem $h={44}><AssemblyIco /></RailItem>
          <RailItem $h={41}><ConstraintIco /></RailItem>
          <RailItem $h={44} $active><PartIco /></RailItem>
          <RailItem $h={42} $mb={5}><BooksIco /></RailItem>
          <RailItem $h={54}><InfoIco /></RailItem>
          <RailItem $h={54}><DocIco /></RailItem>
          <RailItem $h={54}><ClockIco /></RailItem>
          <RailItem $h={32}><ColorIco /></RailItem>
        </Rail>

        <Navigator>
          <NavHead>
            <span>Part Navigator</span>
            <RestoreBtn />
          </NavHead>
          <TreeTable>
            <TreeHead>
              <HeadCell>Name<SortUp /></HeadCell>
              <HeadCell>Up to Date</HeadCell>
              <div />
            </TreeHead>
            {Array.from({ length: 18 }, (_, i) => {
              const row = ROWS[i];
              if (row) return <TreeItem key={row.key} row={row} index={i} odd={i % 2 === 1} />;
              return (
                <TreeRow key={i} $odd={i % 2 === 1}>
                  <NameCell />
                  <DateCell />
                  <div />
                </TreeRow>
              );
            })}
          </TreeTable>
        </Navigator>

        <Viewport>
          <DocTabs>
            <DocTab><CubeTab />solid1.prt<DocClose>✕</DocClose></DocTab>
          </DocTabs>
          <Canvas><SolidDrawing /></Canvas>
        </Viewport>
      </Main>
    </Page>
  );
}
